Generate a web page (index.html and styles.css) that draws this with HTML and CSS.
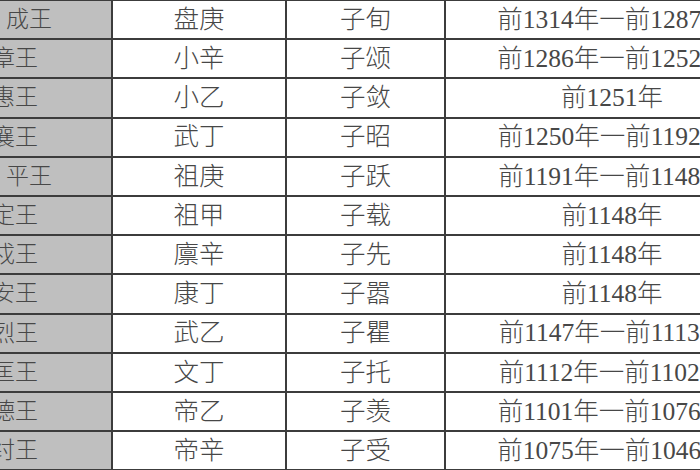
FILE: index.html
```html
<!DOCTYPE html>
<html lang="zh">
<head>
<meta charset="utf-8">
<link rel="stylesheet" href="styles.css">
</head>
<body>
<table class="kings">
  <colgroup>
    <col class="c-title"><col class="c-name"><col class="c-given"><col class="c-years">
  </colgroup>
  <tbody>
    <tr><td class="title wide">成王</td><td>盘庚</td><td>子旬</td><td>前1314年一前1287年</td></tr>
    <tr><td class="title">殷章王</td><td>小辛</td><td>子颂</td><td>前1286年一前1252年</td></tr>
    <tr><td class="title">殷惠王</td><td>小乙</td><td>子敛</td><td>前1251年</td></tr>
    <tr><td class="title">殷襄王</td><td>武丁</td><td>子昭</td><td>前1250年一前1192年</td></tr>
    <tr><td class="title wide">平王</td><td>祖庚</td><td>子跃</td><td>前1191年一前1148年</td></tr>
    <tr><td class="title">殷定王</td><td>祖甲</td><td>子载</td><td>前1148年</td></tr>
    <tr><td class="title">殷戍王</td><td>廪辛</td><td>子先</td><td>前1148年</td></tr>
    <tr><td class="title">殷安王</td><td>康丁</td><td>子嚣</td><td>前1148年</td></tr>
    <tr><td class="title">殷烈王</td><td>武乙</td><td>子瞿</td><td>前1147年一前1113年</td></tr>
    <tr><td class="title">殷匡王</td><td>文丁</td><td>子托</td><td>前1112年一前1102年</td></tr>
    <tr><td class="title">殷德王</td><td>帝乙</td><td>子羡</td><td>前1101年一前1076年</td></tr>
    <tr><td class="title">殷纣王</td><td>帝辛</td><td>子受</td><td>前1075年一前1046年</td></tr>
  </tbody>
</table>
</body>
</html>
```

FILE: styles.css
```css
html, body {
  margin: 0;
  padding: 0;
  background: #ffffff;
  overflow: hidden;
  width: 700px;
  height: 470px;
}

.kings {
  border-collapse: collapse;
  table-layout: fixed;
  width: 877px;
  margin-left: -99px;
  margin-top: -1px;
  font-family: "Liberation Serif", "Noto Sans CJK SC", serif;
  font-size: 25.5px;
  font-weight: 300;
  color: #474747;
}

.c-title { width: 210px; }
.c-name { width: 174px; }
.c-given { width: 159px; }
.c-years { width: 334px; }

.kings td {
  border: 2px solid #3c3c3c;
  height: 39.2px;
  box-sizing: border-box;
  padding: 0;
  text-align: center;
  vertical-align: middle;
  white-space: nowrap;
  overflow: hidden;
  line-height: 1;
}

.kings td.title {
  background: #bfbfbf;
  text-align: right;
  padding-right: 73px;
  font-size: 23px;
}

.kings td.title.wide {
  padding-right: 59px;
}
```
